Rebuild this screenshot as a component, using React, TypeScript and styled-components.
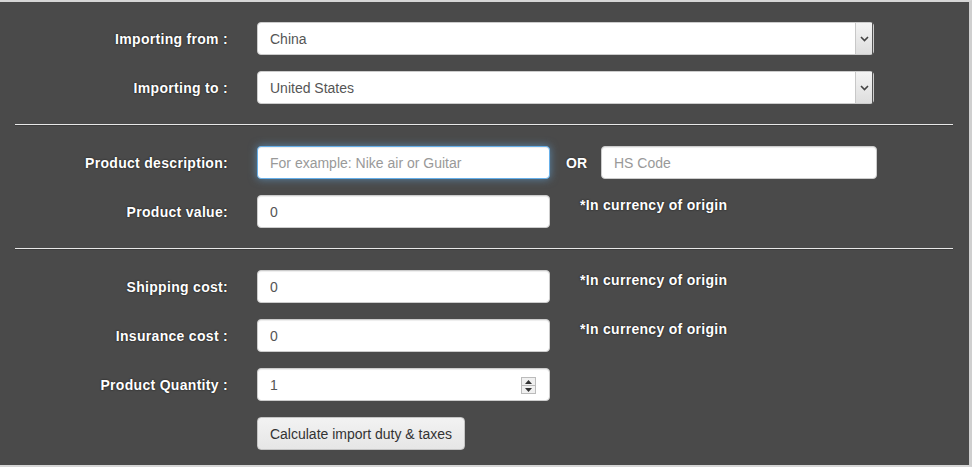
import React from "react";
import styled, { createGlobalStyle } from "styled-components";

const GlobalStyle = createGlobalStyle`
  html, body {
    margin: 0;
    padding: 0;
    background: #4a4a4a;
  }
  body {
    font-family: "Liberation Sans", Arial, sans-serif;
  }
`;

const Panel = styled.div`
  box-sizing: border-box;
  width: 972px;
  height: 467px;
  background: #4a4a4a;
  border-top: 2px solid #d6d6d6;
  border-right: 3px solid #cfcfcf;
  border-bottom: 2px solid #d6d6d6;
  padding-top: 20px;
`;

const Section = styled.div`
  display: flex;
  flex-direction: column;
  gap: 16px;
`;

const Row = styled.div`
  display: flex;
  align-items: center;
  height: 33px;
`;

const Label = styled.label`
  width: 228px;
  margin-right: 29px;
  text-align: right;
  color: #ffffff;
  font-size: 14px;
  font-weight: bold;
  letter-spacing: 0.3px;
  text-shadow: 0 0 2px #222, 0 0 1px #222;
  white-space: nowrap;
`;

const Divider = styled.hr`
  margin: 20px 16px 21px 15px;
  border: 0;
  height: 1px;
  background: #e8e8e8;
  box-shadow: 0 1px 0 #3c3c3c;
`;

const Field = styled.input<{ $width: number; $focused?: boolean }>`
  box-sizing: border-box;
  width: ${(p) => p.$width}px;
  height: 33px;
  padding: 0 12px;
  font-family: "Liberation Sans", Arial, sans-serif;
  font-size: 14px;
  color: #555;
  background: #fff;
  border: 1px solid ${(p) => (p.$focused ? "#66afe9" : "#cccccc")};
  border-radius: 4px;
  box-shadow: ${(p) =>
    p.$focused
      ? "inset 0 1px 1px rgba(0,0,0,.075), 0 0 8px rgba(102,175,233,.6)"
      : "inset 0 1px 1px rgba(0,0,0,.075)"};
  outline: none;

  &::placeholder {
    color: #999;
  }
`;

const SelectWrap = styled.div`
  position: relative;
  width: 617px;
  height: 33px;
`;

const Select = styled.select`
  box-sizing: border-box;
  width: 100%;
  height: 100%;
  padding: 0 12px;
  appearance: none;
  font-family: "Liberation Sans", Arial, sans-serif;
  font-size: 14px;
  color: #555;
  background: #fff;
  border: 1px solid #cccccc;
  border-radius: 4px;
  outline: none;
`;

const ArrowBox = styled.div`
  position: absolute;
  top: 1px;
  right: 1px;
  width: 16px;
  height: 31px;
  background: linear-gradient(#f4f4f4, #dedede);
  border-left: 1px solid #c8c8c8;
  border-right: 1px solid #555;
  display: flex;
  align-items: center;
  justify-content: center;
  pointer-events: none;
`;

const SpinWrap = styled.div`
  position: relative;
`;

const Spinner = styled.div`
  position: absolute;
  top: 9px;
  right: 14px;
  width: 13px;
  height: 15px;
  display: flex;
  flex-direction: column;
  border: 1px solid #bbb;
  background: #f0f0f0;
  pointer-events: none;
`;

const SpinHalf = styled.div`
  flex: 1;
  display: flex;
  align-items: center;
  justify-content: center;
  & + & {
    border-top: 1px solid #bbb;
  }
`;

const Or = styled.span`
  margin: 0 14px 0 16px;
  color: #fff;
  font-size: 14px;
  font-weight: bold;
  text-shadow: 0 0 2px #222;
`;

const Note = styled.span`
  align-self: flex-start;
  margin-left: 30px;
  margin-top: 1px;
  line-height: 18px;
  color: #fff;
  font-size: 14px;
  font-weight: bold;
  letter-spacing: 0.3px;
  text-shadow: 0 0 2px #222, 0 0 1px #222;
  white-space: nowrap;
`;

const Button = styled.button`
  box-sizing: border-box;
  width: 208px;
  height: 33px;
  padding: 0 8px;
  font-family: "Liberation Sans", Arial, sans-serif;
  font-size: 14px;
  color: #333;
  white-space: nowrap;
  background: linear-gradient(#f2f2f2, #e6e6e6);
  border: 1px solid #c4c4c4;
  border-radius: 4px;
  cursor: pointer;
`;

const Spacer = styled.div`
  width: 257px;
  flex-shrink: 0;
`;

const Chevron = () => (
  <svg width="9" height="6" viewBox="0 0 9 6">
    <path d="M1 1 L4.5 4.5 L8 1" fill="none" stroke="#444" strokeWidth="1.6" />
  </svg>
);

const Tri: React.FC<{ up?: boolean }> = ({ up }) => (
  <svg width="7" height="4" viewBox="0 0 7 4">
    <path d={up ? "M0 4 L3.5 0 L7 4 Z" : "M0 0 L3.5 4 L7 0 Z"} fill="#333" />
  </svg>
);

const CountrySelect: React.FC<{ value: string; options: string[] }> = ({
  value,
  options,
}) => (
  <SelectWrap>
    <Select defaultValue={value}>
      {options.map((o) => (
        <option key={o}>{o}</option>
      ))}
    </Select>
    <ArrowBox>
      <Chevron />
    </ArrowBox>
  </SelectWrap>
);

const countries = ["China", "United States", "Germany", "Japan"];

const App: React.FC = () => {
  return (
    <>
      <GlobalStyle />
      <Panel>
        <Section>
          <Row>
            <Label>Importing from :</Label>
            <CountrySelect value="China" options={countries} />
          </Row>
          <Row>
            <Label>Importing to :</Label>
            <CountrySelect value="United States" options={countries} />
          </Row>
        </Section>

        <Divider />

        <Section>
          <Row>
            <Label>Product description:</Label>
            <Field
              $width={293}
              $focused
              type="text"
              placeholder="For example: Nike air or Guitar"
            />
            <Or>OR</Or>
            <Field $width={276} type="text" placeholder="HS Code" />
          </Row>
          <Row>
            <Label>Product value:</Label>
            <Field $width={293} type="text" defaultValue="0" />
            <Note>*In currency of origin</Note>
          </Row>
        </Section>

        <Divider />

        <Section>
          <Row>
            <Label>Shipping cost:</Label>
            <Field $width={293} type="text" defaultValue="0" />
            <Note>*In currency of origin</Note>
          </Row>
          <Row>
            <Label>Insurance cost :</Label>
            <Field $width={293} type="text" defaultValue="0" />
            <Note>*In currency of origin</Note>
          </Row>
          <Row>
            <Label>Product Quantity :</Label>
            <SpinWrap>
              <Field $width={293} type="text" defaultValue="1" />
              <Spinner>
                <SpinHalf>
                  <Tri up />
                </SpinHalf>
                <SpinHalf>
                  <Tri />
                </SpinHalf>
              </Spinner>
            </SpinWrap>
          </Row>
          <Row>
            <Spacer />
            <Button type="button">Calculate import duty &amp; taxes</Button>
          </Row>
        </Section>
      </Panel>
    </>
  );
};

export default App;
